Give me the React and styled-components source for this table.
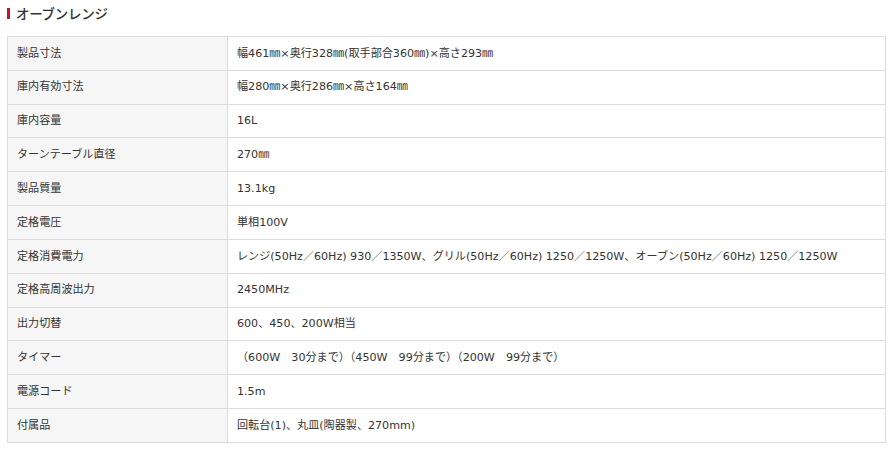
import React from "react";
import styled, { createGlobalStyle } from "styled-components";

const GlobalStyle = createGlobalStyle`
  body {
    margin: 0;
    background: #fff;
    font-family: "DejaVu Sans", "Noto Sans CJK JP", sans-serif;
    color: #333;
  }
`;

const rows = [
  ["製品寸法", "幅461㎜×奥行328㎜(取手部合360㎜)×高さ293㎜"],
  ["庫内有効寸法", "幅280㎜×奥行286㎜×高さ164㎜"],
  ["庫内容量", "16L"],
  ["ターンテーブル直径", "270㎜"],
  ["製品質量", "13.1kg"],
  ["定格電圧", "単相100V"],
  [
    "定格消費電力",
    "レンジ(50Hz／60Hz) 930／1350W、グリル(50Hz／60Hz) 1250／1250W、オーブン(50Hz／60Hz) 1250／1250W",
  ],
  ["定格高周波出力", "2450MHz"],
  ["出力切替", "600、450、200W相当"],
  ["タイマー", "（600W　30分まで）（450W　99分まで）（200W　99分まで）"],
  ["電源コード", "1.5m"],
  ["付属品", "回転台(1)、丸皿(陶器製、270mm)"],
];

const App = () => {
  return (
    <Wrap>
      <GlobalStyle />
      <Title>オーブンレンジ</Title>
      <SpecTable>
        <tbody>
          {rows.map(([label, value]) => (
            <tr key={label}>
              <Label>{label}</Label>
              <Value>{value}</Value>
            </tr>
          ))}
        </tbody>
      </SpecTable>
    </Wrap>
  );
};

const Wrap = styled.div`
  padding: 7px 10px 0 7px;
`;

const Title = styled.h3`
  margin: 0;
  position: relative;
  padding-left: 9px;
  font-family: "Noto Sans CJK JP", sans-serif;
  font-size: 13.5px;
  font-weight: 500;
  letter-spacing: -0.3px;
  line-height: 13px;
  color: #333;

  &::before {
    content: "";
    position: absolute;
    left: 0;
    top: 1px;
    width: 3px;
    height: 11px;
    background: #c4161c;
  }
`;

const SpecTable = styled.table`
  margin-top: 16px;
  width: 879px;
  border-collapse: collapse;
  font-size: 11.1px;
`;

const Cell = styled.td`
  height: 33.83px;
  box-sizing: border-box;
  padding: 0 9px;
  border: 1px solid #dcdcdc;
  vertical-align: middle;
  line-height: 1.4;
`;

const Label = styled(Cell)`
  width: 220px;
  background: #f6f6f6;
`;

const Value = styled(Cell)`
  background: #fff;
`;

export default App;
